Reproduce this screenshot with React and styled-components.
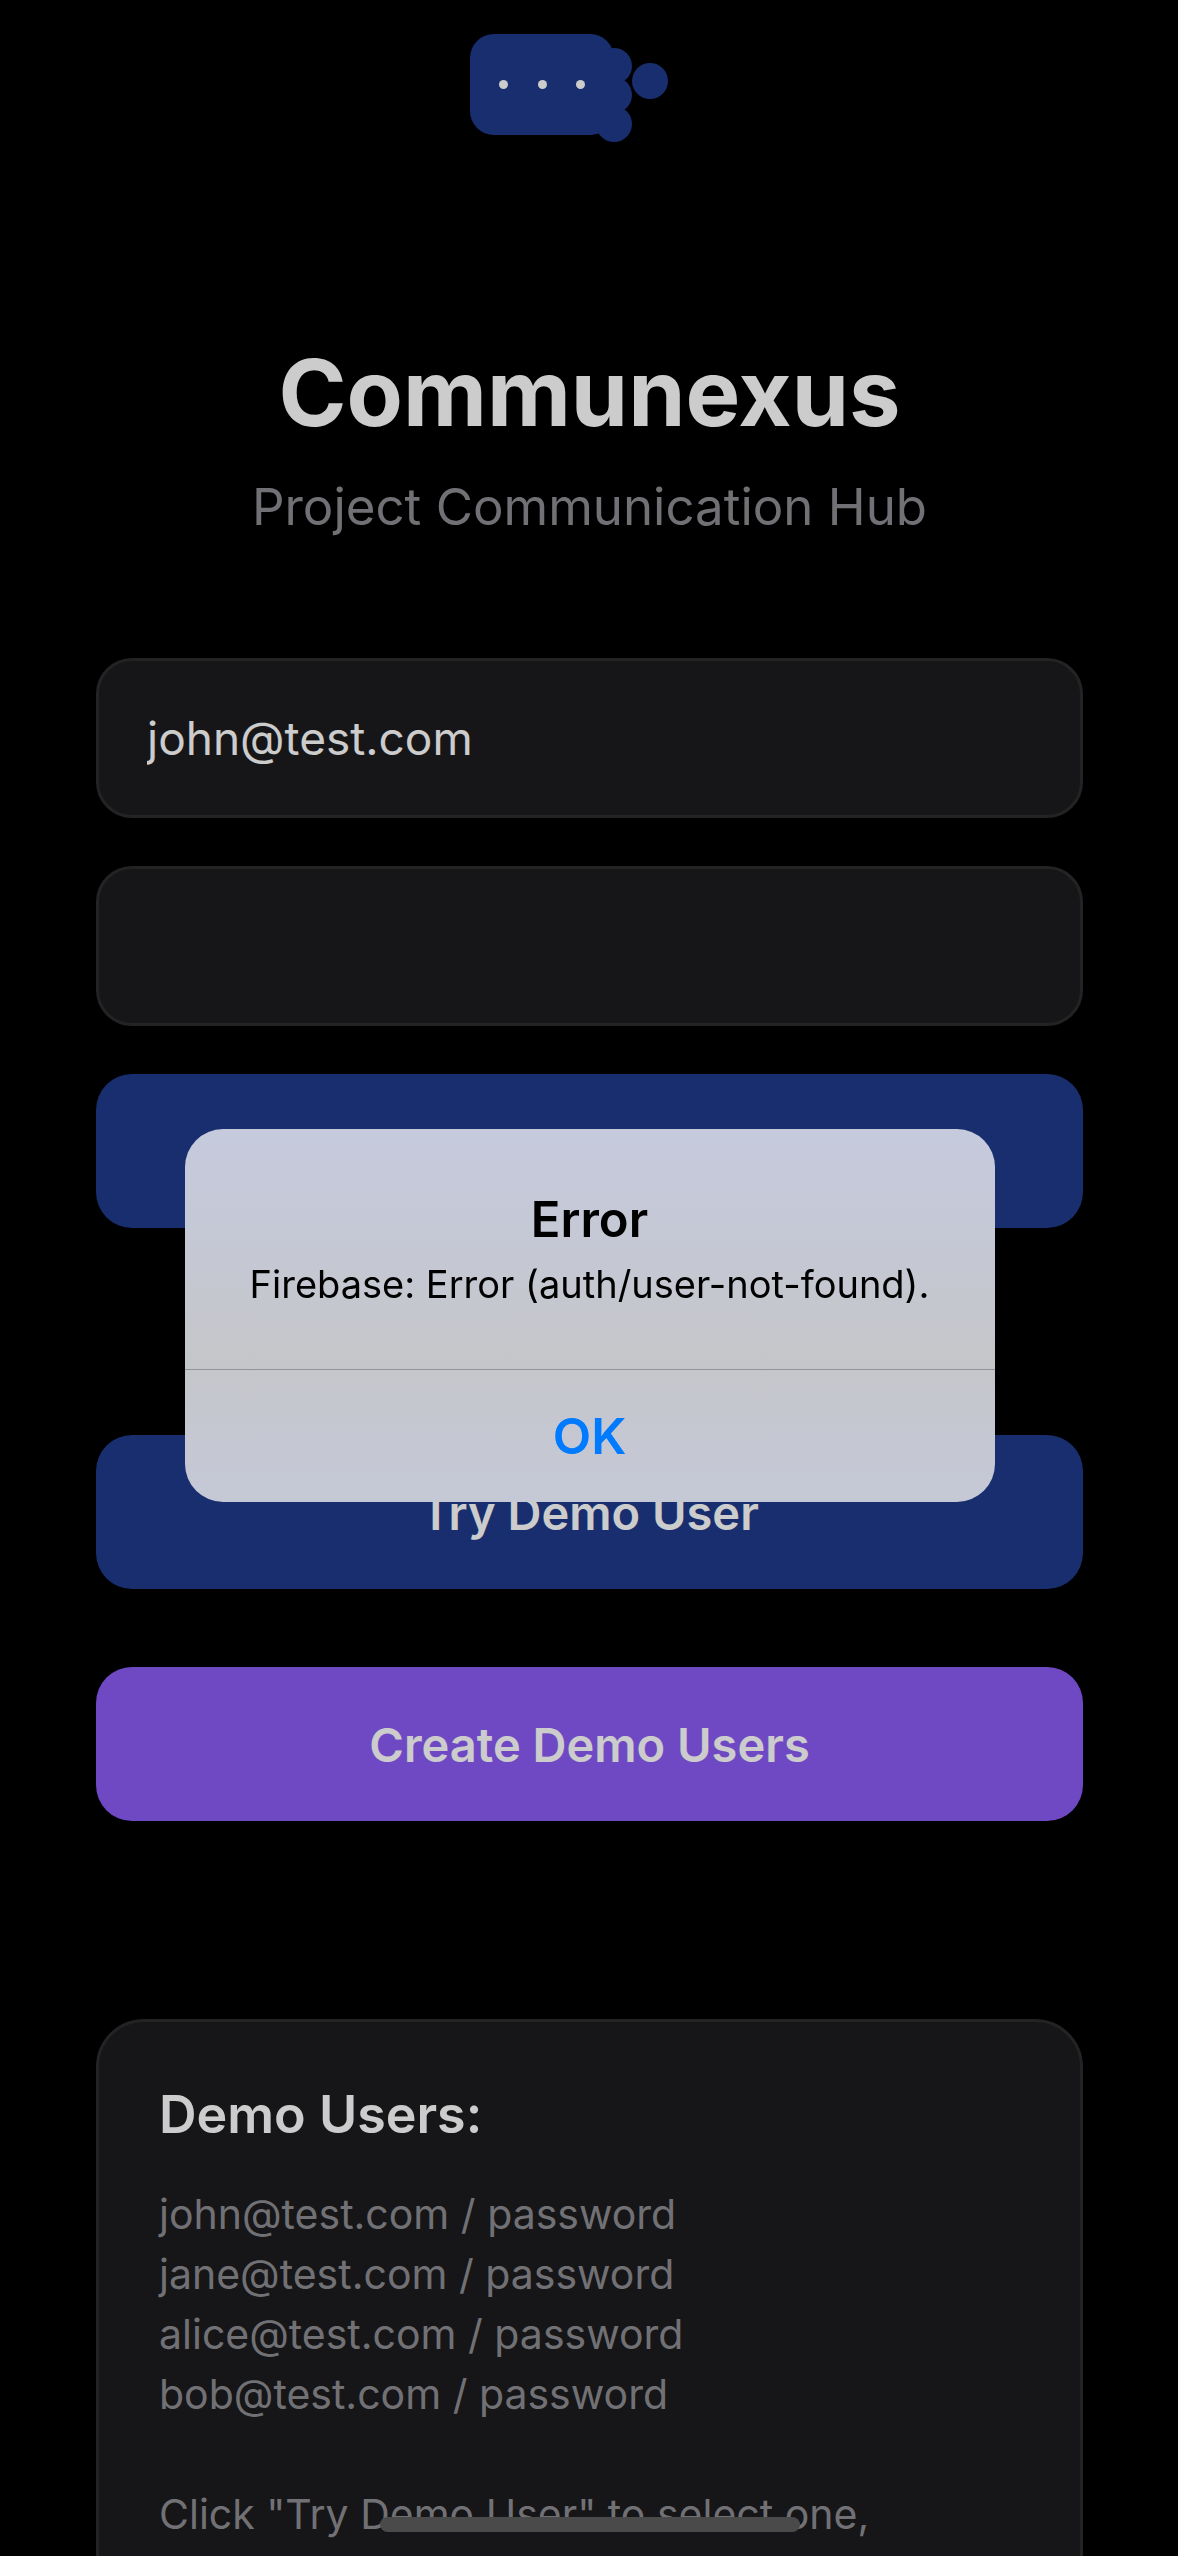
import React, { useState } from "react";
import styled, { createGlobalStyle } from "styled-components";

const GlobalStyle = createGlobalStyle`
  *, *::before, *::after {
    box-sizing: border-box;
  }
  body {
    margin: 0;
    background: #000;
    font-family: Inter, "Liberation Sans", sans-serif;
  }
  h1, h2, p, ul {
    margin: 0;
    padding: 0;
  }
  button, input {
    font-family: inherit;
  }
`;

const Screen = styled.main`
  display: flex;
  flex-direction: column;
  height: 100vh;
  padding: 0 95px 0 96px;
  overflow-y: auto;
  scrollbar-width: none;
  background: #000;
`;

const Header = styled.header`
  display: flex;
  flex-direction: column;
  align-items: center;
  text-align: center;
`;

const Logo = styled.svg`
  width: 241px;
  height: 240px;
`;

const Title = styled.h1`
  margin-top: 93px;
  color: #fff;
  font-size: 92px;
  font-weight: 700;
  line-height: 120px;
`;

const Subtitle = styled.p`
  margin-top: 22px;
  color: #8e8e93;
  font-size: 51px;
  line-height: 64px;
`;

const Form = styled.form`
  display: flex;
  flex-direction: column;
  flex-shrink: 0;
  gap: 48px;
  margin-top: 119px;
`;

const Field = styled.input`
  width: 100%;
  height: 160px;
  padding: 0 48px;
  border: 3px solid #2c2c2e;
  border-radius: 36px;
  outline: none;
  background: #1c1c1e;
  color: #fff;
  font-size: 46px;
`;

const Button = styled.button`
  flex-shrink: 0;
  width: 100%;
  height: 154px;
  padding: 0;
  border: 0;
  border-radius: 36px;
  background: ${(p) => (p.$tone === "violet" ? "#8b5cf6" : "#1e3a8a")};
  color: #fff;
  font-size: 47px;
  font-weight: 600;
`;

const Actions = styled.div`
  display: flex;
  flex-direction: column;
  flex-shrink: 0;
  gap: 78px;
  margin-top: 207px;
`;

const Card = styled.section`
  flex-shrink: 0;
  margin-top: 198px;
  padding: 60px;
  border: 3px solid #2c2c2e;
  border-radius: 48px;
  background: #1c1c1e;
`;

const CardTitle = styled.h2`
  color: #fff;
  font-size: 52px;
  font-weight: 600;
  line-height: 66px;
`;

const UserList = styled.ul`
  margin-top: 36px;
  list-style: none;
  color: #8e8e93;
  font-size: 41px;
  line-height: 60px;
`;

const Hint = styled.p`
  margin-top: 60px;
  color: #8e8e93;
  font-size: 41px;
  line-height: 60px;
`;

const Backdrop = styled.div`
  position: fixed;
  inset: 0;
  display: flex;
  align-items: center;
  justify-content: center;
  padding: 75px 95px 0 96px;
  background: rgba(0, 0, 0, 0.2);
`;

const Alert = styled.div`
  width: 810px;
  max-width: 100%;
  overflow: hidden;
  border-radius: 38px;
  background: linear-gradient(#c5cadd 0%, #c5c8d3 35%, #c5c6c9 62%, #c5c7d1 80%, #c5c9d6 100%);
  text-align: center;
`;

const AlertBody = styled.div`
  padding: 60px 48px 58px;
`;

const AlertTitle = styled.h2`
  color: #000;
  font-size: 49px;
  font-weight: 600;
  line-height: 62px;
`;

const AlertText = styled.p`
  margin-top: 6px;
  color: #000;
  font-size: 38px;
  line-height: 54px;
`;

const AlertButton = styled.button`
  display: block;
  width: 100%;
  height: 133px;
  padding: 0;
  border: 0;
  border-top: 1px solid #919298;
  background: transparent;
  color: #007aff;
  font-size: 50px;
  font-weight: 600;
`;

const HomeIndicator = styled.div`
  position: fixed;
  bottom: 24px;
  left: 50%;
  width: 420px;
  height: 15px;
  margin-left: -209px;
  border-radius: 8px;
  background: #4a4a4a;
`;

const users = ["john@test.com", "jane@test.com", "alice@test.com", "bob@test.com"];

export default function App() {
  const [email, setEmail] = useState("john@test.com");
  const [password, setPassword] = useState("");
  const [alertOpen, setAlertOpen] = useState(true);

  return (
    <>
      <GlobalStyle />
      <Screen>
        <Header>
          <Logo viewBox="0 0 241 240" aria-hidden="true">
            <g fill="#1e3a8a">
              <rect x="1" y="34" width="144" height="101" rx="24" />
              <circle cx="145" cy="66" r="18" />
              <circle cx="145" cy="95" r="18" />
              <circle cx="145" cy="124" r="18" />
              <circle cx="181" cy="81" r="18" />
            </g>
            <g fill="#fff">
              <circle cx="34.5" cy="84.5" r="4.5" />
              <circle cx="73.5" cy="84.5" r="4.5" />
              <circle cx="111.5" cy="84.5" r="4.5" />
            </g>
          </Logo>
          <Title>Communexus</Title>
          <Subtitle>Project Communication Hub</Subtitle>
        </Header>

        <Form
          onSubmit={(e) => {
            e.preventDefault();
            setAlertOpen(true);
          }}
        >
          <Field type="text" aria-label="Email" value={email} onChange={(e) => setEmail(e.target.value)} />
          <Field type="password" aria-label="Password" value={password} onChange={(e) => setPassword(e.target.value)} />
          <Button type="submit" aria-label="Sign In" />
        </Form>

        <Actions>
          <Button type="button">Try Demo User</Button>
          <Button type="button" $tone="violet">Create Demo Users</Button>
        </Actions>

        <Card>
          <CardTitle>Demo Users:</CardTitle>
          <UserList>
            {users.map((user) => (
              <li key={user}>{user} / password</li>
            ))}
          </UserList>
          <Hint>Click "Try Demo User" to select one,</Hint>
        </Card>
      </Screen>

      {alertOpen && (
        <Backdrop>
          <Alert role="alertdialog" aria-modal="true" aria-labelledby="alert-title" aria-describedby="alert-text">
            <AlertBody>
              <AlertTitle id="alert-title">Error</AlertTitle>
              <AlertText id="alert-text">Firebase: Error (auth/user-not-found).</AlertText>
            </AlertBody>
            <AlertButton type="button" onClick={() => setAlertOpen(false)}>OK</AlertButton>
          </Alert>
        </Backdrop>
      )}
      <HomeIndicator />
    </>
  );
}
